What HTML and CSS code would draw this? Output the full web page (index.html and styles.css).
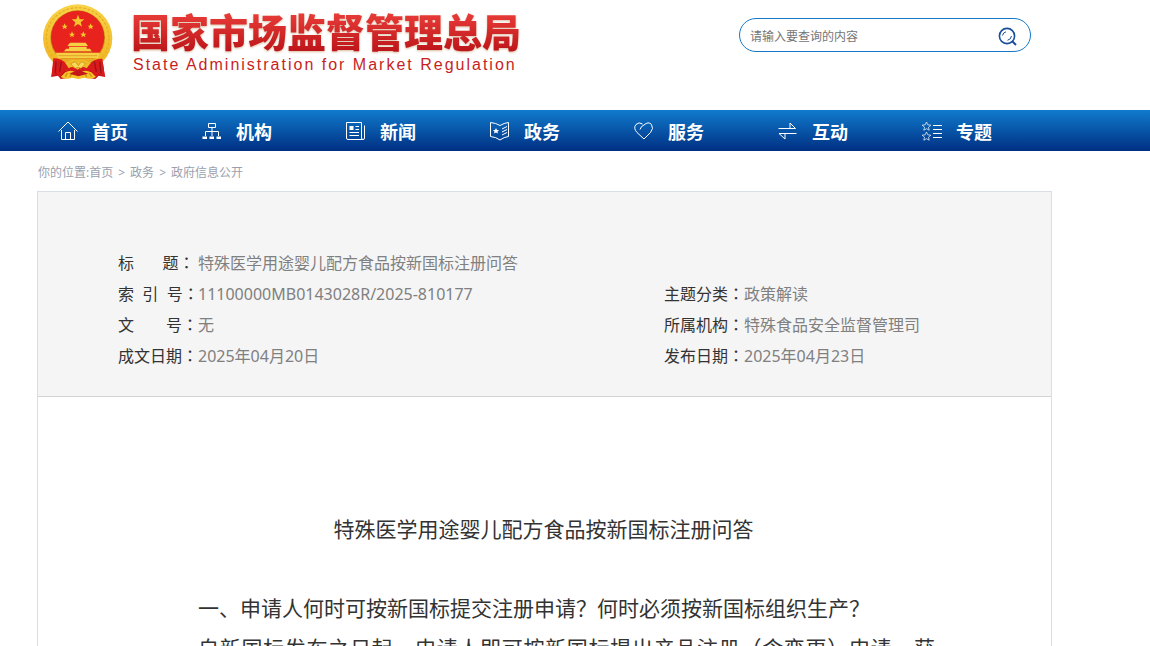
FILE: index.html
```html
<!DOCTYPE html>
<html lang="zh-CN">
<head>
<meta charset="utf-8">
<title>特殊医学用途婴儿配方食品按新国标注册问答</title>
<link rel="stylesheet" href="styles.css">
</head>
<body>
<header class="header">
  <a class="brand" href="#">
    <svg class="emblem" viewBox="36 8 219 234" aria-hidden="true">
      <defs>
        <linearGradient id="gold" x1="0" y1="0" x2="0" y2="1">
          <stop offset="0" stop-color="#f8d349"/><stop offset="1" stop-color="#efb21d"/>
        </linearGradient>
      </defs>
      <path d="M72 176L64 230L84 226L92 236L118 232L146 208L174 232L196 236L206 226L225 230L217 176Z" fill="#c91518"/>
      <ellipse cx="143" cy="114" rx="104" ry="102" fill="url(#gold)"/>
      <ellipse cx="143" cy="114" rx="94" ry="92" fill="none" stroke="#e9b022" stroke-width="4" stroke-dasharray="8 5"/>
      <ellipse cx="143" cy="112" rx="82" ry="82" fill="#c98a16"/>
      <ellipse cx="143" cy="111" rx="80" ry="80" fill="#e8221c"/>
      <path d="M144 43L149 57L163 57L152 66L156 79L144 71L132 79L136 66L125 57L139 57Z" fill="#f5c72c"/>
      <g fill="#f5c72c">
        <path id="star" d="M104 69L107 76L113 76L108 81L110 87L104 83L98 87L100 81L95 76L101 76Z"/>
        <use href="#star" x="78"/><use href="#star" x="22" y="24"/><use href="#star" x="56" y="24"/>
      </g>
      <g fill="#f6d044">
        <path d="M120 127H167L174 137H112ZM117 139H170V145H117ZM108 145H180L185 153H102ZM77 157H210L204 174H84Z"/>
        <path d="M92 174H196L184 190H104Z" fill="#e7ad22"/>
      </g>
      <path d="M100 155H187M84 166H202" stroke="#d39019" stroke-width="2"/>
      <path d="M70 174Q93 173 109 190Q125 205 143 191Q162 206 179 190Q194 174 217 175L225 230L207 219L198 231L181 209L170 220L146 212L121 220L107 208L88 230L80 217L64 230Z" fill="#d91b1b"/>
      <path d="M78 184L76 218M94 184L89 214M193 184L199 214M209 184L213 218" stroke="#9f1019" stroke-width="4"/>
      <path d="M106 188Q122 175 143 180Q164 175 182 188L170 204Q155 195 143 208Q130 195 116 204Z" fill="#efbb28"/>
      <path d="M122 190L136 184L145 196L154 184L167 190L153 204L145 201L135 204Z" fill="#f9d956" stroke="#c7881b" stroke-width="2"/>
      <path d="M106 216Q124 205 144 219Q164 205 184 216L198 230Q181 239 164 232L145 236L126 232Q108 239 92 230Z" fill="#f4c326"/>
      <path d="M112 218L106 229M126 217L120 230M164 217L170 230M178 218L185 229" stroke="#d69018" stroke-width="4"/>
      <path d="M118 220L145 208L174 220L145 228Z" fill="#c31719"/>
    </svg>
    <span class="brand-text">
      <span class="brand-cn">国家市场监督管理总局</span>
      <span class="brand-en">State Administration for Market Regulation</span>
    </span>
  </a>
  <form class="search">
    <input class="search-input" type="text" aria-label="请输入要查询的内容" placeholder="请输入要查询的内容">
    <button class="search-button" type="button" aria-label="搜索">
      <svg viewBox="0 0 20 20" fill="none" stroke="#164e9c"><circle cx="9" cy="9" r="7.6" stroke-width="1.6"/><path d="M14.5 14.5L18 18" stroke-width="2"/><path d="M4.500 8.500Q5 5.500 8 4.800M13.500 9Q13 12.500 9.500 13.300" stroke-width="1"/></svg>
    </button>
  </form>
</header>
<nav class="nav">
  <a class="nav-item" href="#"><svg class="nav-icon" viewBox="0 0 20 20"><path d="M.5 10.500L10 1L19.500 10.500M3.500 9V18.500H16.500V9M7.500 18V11.500H12.500V18"/></svg>首页</a>
  <a class="nav-item" href="#"><svg class="nav-icon" viewBox="0 0 20 20"><path d="M6.500 2.500H13.500V6.500H6.500ZM10 6.500V15M3.500 15V10.500H16.500V15"/><path class="solid" d="M.5 15.500H5V18H.5ZM7.500 15.500H12V18H7.500ZM14.500 15.500H19V18H14.500Z"/></svg>机构</a>
  <a class="nav-item" href="#"><svg class="nav-icon" viewBox="0 0 20 20"><path d="M16.500 18.500H2Q.5 18.500 .5 17V1.500H15.500V17Q15.500 18.500 17 18.500T18.500 17V4.500M9.500 5.500H13M9.500 8.500H13M3.500 11.500H13M3.500 14.500H13"/><path class="solid" d="M3.500 5H7.500V9H3.500Z"/></svg>新闻</a>
  <a class="nav-item" href="#"><svg class="nav-icon" viewBox="0 0 20 20"><path d="M.5 1.500Q6 2 10 4.500Q14 2 18.500 1.500V15.500Q14 16 10 19Q6 16 .5 15.500ZM12 8L17 5.500M12 11L17 8.500M12 14L17 11.500"/><path class="solid" d="M6 7L7 9H9L7.500 10.500L8 12.500L6 11.500L4 12.500L4.500 10.500L3 9H5Z"/></svg>政务</a>
  <a class="nav-item" href="#"><svg class="nav-icon" viewBox="0 0 20 20"><path d="M6 8.500Q7 5 10 4Q14.500 0 17.500 3.500Q20 7.500 16.500 11.500L10 18L3 11.500Q-1 7 2 3.500Q5 .5 8.500 3"/></svg>服务</a>
  <a class="nav-item" href="#"><svg class="nav-icon" viewBox="0 0 20 20"><path d="M.5 7.500H17.500L12 2V7M18.500 12.500H1L7 18V13"/></svg>互动</a>
  <a class="nav-item" href="#"><svg class="nav-icon" viewBox="0 0 20 20"><g class="thin"><path d="M4.500 1L5.800 3.800L8.800 4.200L6.500 6.200L7.200 9.200L4.500 7.700L1.800 9.200L2.500 6.200L.2 4.200L3.200 3.800ZM4.500 11L5.800 13.800L8.800 14.200L6.500 16.200L7.200 19.200L4.500 17.700L1.800 19.200L2.500 16.200L.2 14.200L3.200 13.800Z"/></g><path d="M11 4.500H20M11 8.500H20M11 12.500H20M11 16.500H20"/></svg>专题</a>
</nav>
<main class="main">
  <div class="crumbs">你的位置:<a href="#">首页</a><span class="crumb-sep">&gt;</span><a href="#">政务</a><span class="crumb-sep">&gt;</span><a href="#">政府信息公开</a></div>
  <article class="document">
    <dl class="info">
      <div class="info-row info-wide"><dt>标&emsp;&nbsp;&nbsp;&nbsp;题<span class="mid" lang="zh-TW">：</span></dt><dd>特殊医学用途婴儿配方食品按新国标注册问答</dd></div>
      <div class="info-row"><dt>索&nbsp;&nbsp;引&nbsp;&nbsp;号<span class="mid" lang="zh-TW">：</span></dt><dd>11100000MB0143028R/2025-810177</dd></div>
      <div class="info-row"><dt>主题分类<span class="mid" lang="zh-TW">：</span></dt><dd>政策解读</dd></div>
      <div class="info-row"><dt>文&emsp;&emsp;号<span class="mid" lang="zh-TW">：</span></dt><dd>无</dd></div>
      <div class="info-row"><dt>所属机构<span class="mid" lang="zh-TW">：</span></dt><dd>特殊食品安全监督管理司</dd></div>
      <div class="info-row"><dt>成文日期<span class="mid" lang="zh-TW">：</span></dt><dd>2025年04月20日</dd></div>
      <div class="info-row"><dt>发布日期<span class="mid" lang="zh-TW">：</span></dt><dd>2025年04月23日</dd></div>
    </dl>
    <div class="content">
      <h1 class="title">特殊医学用途婴儿配方食品按新国标注册问答</h1>
      <div class="text">
        <h2 class="question">一、申请人何时可按新国标提交注册申请？何时必须按新国标组织生产？</h2>
        <p class="answer">自新国标发布之日起，申请人即可按新国标提出产品注册<span class="mid" lang="zh-TW">（</span>含变更<span class="mid" lang="zh-TW">）</span>申请。获</p>
      </div>
    </div>
  </article>
</main>
</body>
</html>
```
FILE: styles.css
```css
* { box-sizing: border-box; }
body {
  margin: 0;
  background: #fff;
  color: #333;
  font-family: "Noto Sans", "Noto Sans CJK SC", sans-serif;
}
a { color: inherit; text-decoration: none; }

.header {
  display: flex;
  justify-content: space-between;
  align-items: flex-start;
  height: 110px;
  padding: 3px 119px 0 42px;
}
.brand { display: flex; gap: 16px; }
.emblem { width: 73px; height: 78px; }
.brand-text { display: flex; flex-direction: column; padding-top: 2px; }
.brand-cn {
  font: 900 39px/50px "Noto Sans CJK SC", sans-serif;
  white-space: nowrap;
  color: transparent;
  background: linear-gradient(#e63a37 20%, #be171b 90%);
  background-clip: text;
  filter: drop-shadow(0 1px 1px #d8bca0);
}
.brand-en {
  padding-left: 2px;
  font: 16px/20px "Liberation Sans", Arial, sans-serif;
  letter-spacing: 2px;
  white-space: nowrap;
  color: #c71f22;
}

.search {
  display: flex;
  align-items: center;
  width: 292px;
  height: 34px;
  margin-top: 15px;
  padding: 2px 12px 0 10px;
  border: 1px solid #1479ca;
  border-radius: 17px;
}
.search-input {
  flex: 1;
  min-width: 0;
  padding: 0;
  border: 0;
  outline: 0;
  background: none;
  font: 12px/18px "Noto Sans CJK SC", sans-serif;
}
.search-input::placeholder { color: #757575; }
.search-button {
  width: 20px;
  height: 20px;
  margin-top: 2px;
  padding: 0;
  border: 0;
  background: none;
}
.search-button svg { display: block; }

.nav {
  display: flex;
  height: 41px;
  padding-left: 58px;
  background: linear-gradient(#107bcd, #002f82);
}
.nav-item {
  display: flex;
  align-items: center;
  gap: 14px;
  width: 144px;
  color: #fff;
  font: 700 18px/24px "Noto Sans CJK SC", sans-serif;
}
.nav-icon {
  width: 20px;
  height: 20px;
  overflow: visible;
  fill: none;
  stroke: #fff;
  stroke-width: 1;
}
.nav-icon .solid { fill: #fff; stroke: none; }
.nav-icon .thin { opacity: 0.7; }

.main { max-width: 1052px; padding-left: 37px; }
.crumbs {
  padding: 13px 1px 9px;
  font-size: 12px;
  line-height: 18px;
  color: #999fad;
}
.crumb-sep { margin: 0 5px; }

.document { border: 1px solid #d9dde5; }
.info {
  display: grid;
  grid-template-columns: 546px 1fr;
  grid-auto-rows: 31px;
  margin: 0;
  padding: 56px 80px 24px;
  border-bottom: 1px solid #d3d3d3;
  background: #f5f5f5;
  font-size: 16px;
  line-height: 31px;
}
.info-row { display: flex; }
.info-wide { grid-column: 1 / -1; }
.info dt { width: 80px; white-space: nowrap; }
.info dd { margin: 0; color: #808080; }
.mid { font-family: "Noto Sans CJK TC", sans-serif; line-height: 1; }

.content { padding: 112px 82px 0 80px; }
.title {
  margin: 0;
  font-size: 21px;
  font-weight: 400;
  line-height: 40px;
  text-align: center;
}
.text { padding: 39px 34px 0 80px; font-size: 21px; line-height: 40px; }
.question {
  margin: 0;
  font-size: 21px;
  font-weight: 400;
}
.answer { margin: 0; text-align: justify; text-align-last: justify; }
```
